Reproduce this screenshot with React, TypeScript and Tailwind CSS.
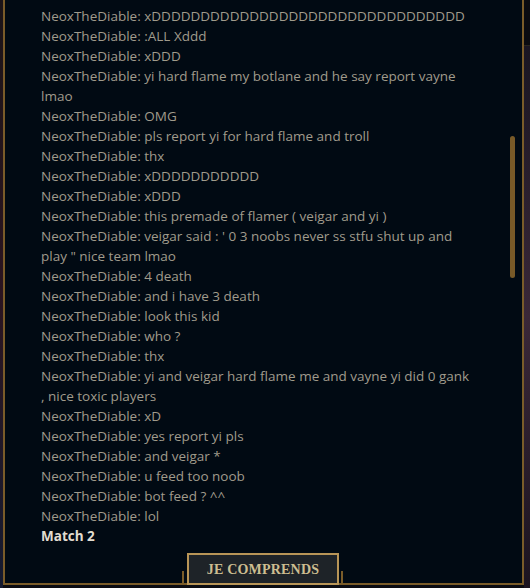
const LINES: string[] = [
  'xDDDDDDDDDDDDDDDDDDDDDDDDDDDDDDDD',
  ':ALL Xddd',
  'xDDD',
  'yi hard flame my botlane and he say report vayne lmao',
  'OMG',
  'pls report yi for hard flame and troll',
  'thx',
  'xDDDDDDDDDDD',
  'xDDD',
  'this premade of flamer ( veigar and yi )',
  'veigar said : \' 0 3 noobs never ss stfu shut up and play " nice team lmao',
  '4 death',
  'and i have 3 death',
  'look this kid',
  'who ?',
  'thx',
  'yi and veigar hard flame me and vayne yi did 0 gank , nice toxic players',
  'xD',
  'yes report yi pls',
  'and veigar *',
  'u feed too noob',
  'bot feed ? ^^',
  'lol',
];

const ChatLog = () => (
  <div
    className="w-[467px] pl-[36px] pt-[6px] text-[13.5px] leading-[20px] text-[#a09b8c]"
    style={{ fontFamily: '"Open Sans", "Liberation Sans", sans-serif' }}
  >
    {LINES.map((line, i) => (
      <p key={i}>NeoxTheDiable: {line}</p>
    ))}
    <p className="font-bold text-[#e2ddd0]">Match 2</p>
  </div>
);

const Scrollbar = () => (
  <div className="pl-[38px] pt-[136px]">
    <div className="w-[5px] h-[142px] rounded-full bg-[#785a28]" />
  </div>
);

const Footer = () => (
  <div className="relative flex justify-center -mb-[2px] pr-[1px]">
    <div className="absolute left-[177px] bottom-[2px] w-[2px] h-[12px] bg-[#7a5c29]" />
    <div className="absolute left-[336px] bottom-[2px] w-[2px] h-[12px] bg-[#7a5c29]" />
    <button className="w-[152px] h-[32px] border-2 border-[#b89557] bg-[#1e2328] flex items-center justify-center">
      <span
        className="font-bold text-[14px] tracking-[0.2px] text-[#cdbe91]"
        style={{ fontFamily: '"Liberation Serif", "DejaVu Serif", serif' }}
      >
        JE COMPRENDS
      </span>
    </button>
  </div>
);

export default function App() {
  return (
    <div className="w-[530px] h-[588px] overflow-hidden flex bg-[#0b0c12]">
      <div className="w-[3px] h-full bg-gradient-to-b from-[#1b1418] via-[#2a1420] to-[#141a30]" />

      <div className="w-[521px] h-[587px] -mt-[2px] border-2 border-[#7a5c29] bg-[#010a13] flex flex-col">
        <div className="flex flex-1">
          <ChatLog />
          <Scrollbar />
        </div>
        <Footer />
      </div>

      <div className="flex-1 flex flex-col">
        <div className="h-[46px] bg-[#0a0b10] border-b border-[#2a2620]" />
        <div className="flex-1 bg-gradient-to-b from-[#1a1622] via-[#3a2838] to-[#1c1420]" />
      </div>
    </div>
  );
}
